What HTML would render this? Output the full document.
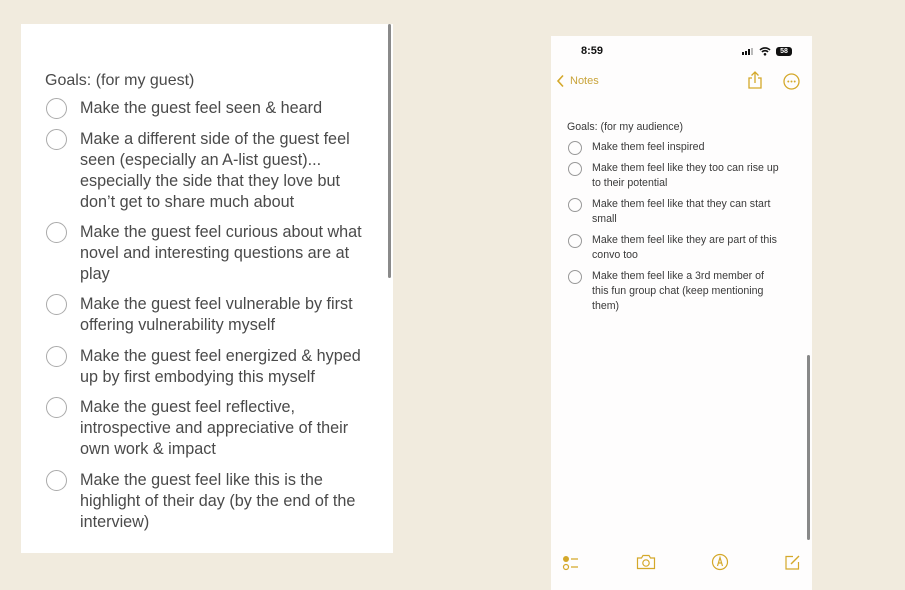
<!DOCTYPE html>
<html><head><meta charset="utf-8"><style>
body{margin:0;width:905px;height:590px;background:#f1ebde;position:relative;overflow:hidden;font-family:"Liberation Sans",sans-serif}
.card{position:absolute;background:#fff}
.t{position:absolute;white-space:nowrap;color:#4a4a4a}
.L{font-size:16.2px;line-height:21px;left:80px}
.R{font-size:10.6px;line-height:15px;left:592px;color:#3a3a3a}
.c{position:absolute;border-radius:50%;box-sizing:border-box}
.cl{width:21px;height:21px;border:1.5px solid #aaa;left:46px}
.cr{width:14px;height:14px;border:1px solid #999;left:568px}
</style></head><body>
<div class="card" style="left:21px;top:24px;width:372px;height:529px"></div>
<div style="position:absolute;left:388px;top:24px;width:3px;height:254px;background:#8a8a8a;border-radius:2px"></div>
<div class="t" style="left:45px;top:70px;font-size:16px;line-height:21px">Goals: (for my guest)</div>
<div class="c cl" style="top:98px"></div><div class="t L" style="top:98px">Make the guest feel seen &amp; heard</div>
<div class="c cl" style="top:129px"></div><div class="t L" style="top:129px">Make a different side of the guest feel<br>seen (especially an A-list guest)...<br>especially the side that they love but<br>don’t get to share much about</div>
<div class="c cl" style="top:222px"></div><div class="t L" style="top:222px">Make the guest feel curious about what<br>novel and interesting questions are at<br>play</div>
<div class="c cl" style="top:294px"></div><div class="t L" style="top:294px">Make the guest feel vulnerable by first<br>offering vulnerability myself</div>
<div class="c cl" style="top:346px"></div><div class="t L" style="top:346px">Make the guest feel energized &amp; hyped<br>up by first embodying this myself</div>
<div class="c cl" style="top:397px"></div><div class="t L" style="top:397px">Make the guest feel reflective,<br>introspective and appreciative of their<br>own work &amp; impact</div>
<div class="c cl" style="top:470px"></div><div class="t L" style="top:470px">Make the guest feel like this is the<br>highlight of their day (by the end of the<br>interview)</div>

<div class="card" style="left:551px;top:36px;width:261px;height:554px;background:#fefdfd"></div>
<div class="t" style="left:581px;top:45px;font-size:11px;font-weight:bold;color:#111">8:59</div>
<div style="position:absolute;left:742px;top:48px;width:12px;height:7px">
<div style="position:absolute;left:0;bottom:0;width:2px;height:3px;background:#111"></div><div style="position:absolute;left:3px;bottom:0;width:2px;height:4px;background:#111"></div><div style="position:absolute;left:6px;bottom:0;width:2px;height:6px;background:#111"></div><div style="position:absolute;left:9px;bottom:0;width:2px;height:7px;background:#bbb"></div></div>
<svg style="position:absolute;left:759px;top:46px" width="12" height="10" viewBox="0 0 12 10"><path d="M1 4a7 7 0 0 1 10 0M3 6a4 4 0 0 1 6 0" stroke="#111" stroke-width="1.6" fill="none"/><circle cx="6" cy="8.3" r="1.3" fill="#111"/></svg>
<div style="position:absolute;left:776px;top:47px;width:16px;height:9px;background:#111;border-radius:3px;color:#fff;font-size:7px;line-height:9px;text-align:center;font-weight:bold">58</div>
<svg style="position:absolute;left:556px;top:74px" width="10" height="14" viewBox="0 0 10 14"><path d="M7 1.5L2 7l5 5.5" stroke="#d4a82a" stroke-width="1.6" fill="none"/></svg>
<div class="t" style="left:570px;top:75px;font-size:11px;color:#c9a43a">Notes</div>
<svg style="position:absolute;left:747px;top:71px" width="16" height="19" viewBox="0 0 16 19"><path d="M8 1v11M4.5 4.5L8 1l3.5 3.5M5 7H2v10h12V7h-3" stroke="#d4a82a" stroke-width="1.3" fill="none"/></svg>
<svg style="position:absolute;left:783px;top:73px" width="17" height="17" viewBox="0 0 17 17"><circle cx="8.5" cy="8.5" r="7.5" stroke="#d4a82a" stroke-width="1.3" fill="none"/><circle cx="5.3" cy="8.5" r="1" fill="#d4a82a"/><circle cx="8.5" cy="8.5" r="1" fill="#d4a82a"/><circle cx="11.7" cy="8.5" r="1" fill="#d4a82a"/></svg>
<div class="t" style="left:567px;top:121px;font-size:10.6px;color:#3a3a3a">Goals: (for my audience)</div>
<div class="c cr" style="top:141px"></div><div class="t R" style="top:140px">Make them feel inspired</div>
<div class="c cr" style="top:162px"></div><div class="t R" style="top:161px">Make them feel like they too can rise up<br>to their potential</div>
<div class="c cr" style="top:198px"></div><div class="t R" style="top:197px">Make them feel like that they can start<br>small</div>
<div class="c cr" style="top:234px"></div><div class="t R" style="top:233px">Make them feel like they are part of this<br>convo too</div>
<div class="c cr" style="top:270px"></div><div class="t R" style="top:269px">Make them feel like a 3rd member of<br>this fun group chat (keep mentioning<br>them)</div>
<div style="position:absolute;left:807px;top:355px;width:3px;height:185px;background:#888;border-radius:2px"></div>
<svg style="position:absolute;left:562px;top:555px" width="20" height="16" viewBox="0 0 20 16"><circle cx="4" cy="4" r="3" fill="#d4a82a"/><circle cx="4" cy="12" r="2.5" stroke="#d4a82a" fill="none" stroke-width="1.2"/><path d="M9 4h7M9 12h7" stroke="#d4a82a" stroke-width="1.2"/></svg>
<svg style="position:absolute;left:636px;top:554px" width="20" height="16" viewBox="0 0 20 16"><path d="M1.5 4h4l1.5-2.5h6L14.5 4h4v10.5h-17z" stroke="#d4a82a" stroke-width="1.2" fill="none"/><circle cx="10" cy="9" r="3.2" stroke="#d4a82a" stroke-width="1.2" fill="none"/></svg>
<svg style="position:absolute;left:711px;top:553px" width="18" height="18" viewBox="0 0 18 18"><circle cx="9" cy="9" r="7.5" stroke="#d4a82a" stroke-width="1.2" fill="none"/><path d="M6.5 13L9 4.5l2.5 8.5M7.5 10h3" stroke="#d4a82a" stroke-width="1.2" fill="none"/></svg>
<svg style="position:absolute;left:784px;top:554px" width="17" height="17" viewBox="0 0 17 17"><path d="M9 2.5H2v12.5h12.5V8" stroke="#d4a82a" stroke-width="1.2" fill="none"/><path d="M7 10l8-8" stroke="#d4a82a" stroke-width="1.4"/></svg>
</body></html>
